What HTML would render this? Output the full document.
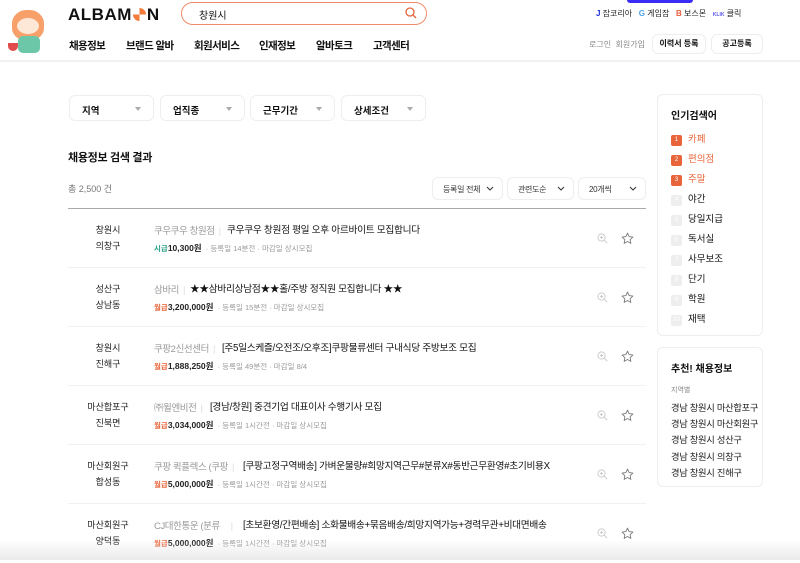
<!DOCTYPE html>
<html><head><meta charset="utf-8"><style>
*{margin:0;padding:0;box-sizing:border-box}
body{width:800px;height:560px;overflow:hidden;background:#fff;font-family:"Liberation Sans","Noto Sans CJK KR",sans-serif;color:#111;position:relative}
.a{position:absolute;white-space:nowrap}
.hdr{position:absolute;left:0;top:0;width:800px;height:62px;border-bottom:2px solid #f2f2f2}
.nav{font-size:10.5px;font-weight:700;top:38px;letter-spacing:-0.6px}
.box{position:absolute;border:1px solid #eee;border-radius:6px;background:#fff}
.flt{top:95px;height:26px;width:85px;font-size:9.5px;font-weight:700;padding:7px 0 0 12px}
.flt:after{content:"";position:absolute;right:12px;top:11px;border:3.5px solid transparent;border-top:4px solid #aaa}
.sel{top:177px;height:23px;font-size:8px;padding:6px 0 0 10px;color:#333;letter-spacing:-0.3px}
.sel svg{position:absolute;right:8px;top:8px}
.row{position:absolute;left:68px;width:578px;height:59px;border-bottom:1px solid #f2f2f2}
.loc{position:absolute;left:0;width:80px;text-align:center;font-size:9px;line-height:16px;top:13px;color:#222}
.co{position:absolute;left:86px;top:14px;font-size:9.5px;color:#999;letter-spacing:-0.4px}
.co i{font-style:normal;color:#ddd;margin:0 4px}
.ti{position:absolute;top:13px;font-size:9.7px;color:#111;letter-spacing:-0.3px}
.mt{position:absolute;left:86px;top:33px;font-size:7.5px;color:#999}
.mt b{font-size:8.5px;color:#222}
.mt .o{color:#e8643a;font-weight:700}
.mt .g{color:#2fa38a;font-weight:700}
.rk{font-size:9.5px;left:671px}
.rk span{display:inline-block;width:11px;height:11px;border-radius:2px;background:#eee;color:#fff;font-size:6px;text-align:center;line-height:11px;margin-right:6px;vertical-align:1px}
.rk.h span{background:#e8643a}.rk.h{color:#e8643a}
</style></head><body>
<div class="hdr"></div>
<div class="a" style="left:12px;top:10px;width:32px;height:30px;background:#f7a06a;border-radius:45% 45% 40% 40%"></div>
<div class="a" style="left:17px;top:18px;width:22px;height:16px;background:#fde8d8;border-radius:50%"></div>
<div class="a" style="left:18px;top:36px;width:22px;height:17px;background:#6cc7a8;border-radius:5px"></div>
<div class="a" style="left:8px;top:43px;width:10px;height:8px;background:#e24b4b;border-radius:0 0 8px 8px"></div>
<div class="a" style="left:68px;top:5px;font-size:17px;font-weight:900;letter-spacing:0.5px">ALBAM<span style="display:inline-block;width:13px;height:13px;border-radius:50%;background:conic-gradient(#f47b3a 0 25%,#fff 0 50%,#f47b3a 0 75%,#fff 0);vertical-align:-1px;margin:0 1px"></span>N</div>
<div class="a" style="left:181px;top:2px;width:246px;height:23px;border:1.5px solid #ef8b6a;border-radius:12px"></div>
<div class="a" style="left:199px;top:7px;font-size:10px">창원시</div>
<svg class="a" style="left:405px;top:7px" width="12" height="12" viewBox="0 0 12 12"><circle cx="5" cy="5" r="4" fill="none" stroke="#e8643a" stroke-width="1.3"/><path d="M8 8l3 3" stroke="#e8643a" stroke-width="1.3"/></svg>
<div class="a" style="left:627px;top:0;width:66px;height:3px;background:#3a2bf5;border-radius:0 0 3px 3px"></div>
<div class="a" style="left:596px;top:8px;font-size:8px;color:#222"><b style="color:#1b2bd8">J</b> 잡코리아 &nbsp; <b style="color:#4aa3e8">G</b> 게임잡 &nbsp; <b style="color:#e85a3a">B</b> 보스몬 &nbsp; <b style="color:#5a5ae8;font-size:5px">KLIK</b> 클릭</div>
<div class="a nav" style="left:69px">채용정보</div>
<div class="a nav" style="left:126px">브랜드 알바</div>
<div class="a nav" style="left:194px">회원서비스</div>
<div class="a nav" style="left:259px">인재정보</div>
<div class="a nav" style="left:316px">알바토크</div>
<div class="a nav" style="left:373px">고객센터</div>
<div class="a" style="left:589px;top:39px;font-size:8px;color:#888">로그인 &nbsp;회원가입</div>
<div class="box" style="left:652px;top:34px;width:54px;height:20px;font-size:8px;font-weight:700;text-align:center;line-height:18px">이력서 등록</div>
<div class="box" style="left:711px;top:34px;width:52px;height:20px;font-size:8px;font-weight:700;text-align:center;line-height:18px">공고등록</div>

<div class="box flt" style="left:69px">지역</div>
<div class="box flt" style="left:160px">업직종</div>
<div class="box flt" style="left:250px">근무기간</div>
<div class="box flt" style="left:341px">상세조건</div>
<div class="a" style="left:68px;top:149px;font-size:11px;font-weight:700;letter-spacing:-0.3px">채용정보 검색 결과</div>
<div class="a" style="left:68px;top:182px;font-size:9px;color:#777">총 2,500 건</div>
<div class="box sel" style="left:432px;width:71px">등록일 전체<svg width="8" height="6"><path d="M1 1l3 3 3-3" fill="none" stroke="#333"/></svg></div>
<div class="box sel" style="left:507px;width:67px">관련도순<svg width="8" height="6"><path d="M1 1l3 3 3-3" fill="none" stroke="#333"/></svg></div>
<div class="box sel" style="left:578px;width:68px">20개씩<svg width="8" height="6"><path d="M1 1l3 3 3-3" fill="none" stroke="#333"/></svg></div>
<div class="a" style="left:68px;top:208px;width:578px;height:1px;background:#aaa"></div>

<div class="row" style="top:209px"><div class="loc">창원시<br>의창구</div><div class="co">쿠우쿠우 창원점<i>|</i></div><div class="ti" style="left:159px">쿠우쿠우 창원점 평일 오후 아르바이트 모집합니다</div><div class="mt"><span class="g">시급</span><b>10,300원</b> &nbsp;· 등록일 14분전 · 마감일 상시모집</div></div>
<div class="row" style="top:268px"><div class="loc">성산구<br>상남동</div><div class="co">삼바리<i>|</i></div><div class="ti" style="left:122px">★★삼바리상남점★★홀/주방 정직원 모집합니다 ★★</div><div class="mt"><span class="o">월급</span><b>3,200,000원</b> &nbsp;· 등록일 15분전 · 마감일 상시모집</div></div>
<div class="row" style="top:327px"><div class="loc">창원시<br>진해구</div><div class="co">쿠팡2신선센터<i>|</i></div><div class="ti" style="left:154px">[주5일스케즐/오전조/오후조]쿠팡물류센터 구내식당 주방보조 모집</div><div class="mt"><span class="o">월급</span><b>1,888,250원</b> &nbsp;· 등록일 49분전 · 마감일 8/4</div></div>
<div class="row" style="top:386px"><div class="loc">마산합포구<br>진북면</div><div class="co">㈜윌엔비전<i>|</i></div><div class="ti" style="left:142px">[경남/창원] 중견기업 대표이사 수행기사 모집</div><div class="mt"><span class="o">월급</span><b>3,034,000원</b> &nbsp;· 등록일 1시간전 · 마감일 상시모집</div></div>
<div class="row" style="top:445px"><div class="loc">마산회원구<br>합성동</div><div class="co">쿠팡 퀵플렉스 (쿠팡<i>|</i></div><div class="ti" style="left:175px">[쿠팡고정구역배송] 가벼운물량#희망지역근무#분류X#동반근무환영#초기비용X</div><div class="mt"><span class="o">월급</span><b>5,000,000원</b> &nbsp;· 등록일 1시간전 · 마감일 상시모집</div></div>
<div class="row" style="top:504px;border:0"><div class="loc">마산회원구<br>양덕동</div><div class="co">CJ대한통운 (분류 &nbsp;&nbsp;<i>|</i></div><div class="ti" style="left:175px">[초보환영/간편배송] 소화물배송+묶음배송/희망지역가능+경력무관+비대면배송</div><div class="mt"><span class="o">월급</span><b>5,000,000원</b> &nbsp;· 등록일 1시간전 · 마감일 상시모집</div></div>

<div id="icons"></div>
<script>
var s='';[238,297,356,415,474,533].forEach(function(y){s+='<svg class="a" style="left:597px;top:'+(y-5)+'px" width="11" height="11" viewBox="0 0 11 11"><circle cx="4.5" cy="4.5" r="3.6" fill="none" stroke="#ccc"/><path d="M7.2 7.2l3 3M4.5 3v3M3 4.5h3" stroke="#ccc"/></svg><svg class="a" style="left:621px;top:'+(y-6)+'px" width="13" height="13" viewBox="0 0 24 24"><path d="M12 2l3 6.5 7 .8-5.2 4.8 1.4 7L12 17.6 5.8 21.1l1.4-7L2 9.3l7-.8z" fill="none" stroke="#777" stroke-width="1.6" stroke-linejoin="round"/></svg>';});document.getElementById('icons').innerHTML=s;
</script>
<div style="position:absolute;left:0;top:540px;width:800px;height:20px;background:linear-gradient(rgba(255,255,255,0),rgba(230,230,230,.8))"></div>

<div class="box" style="left:657px;top:94px;width:106px;height:242px"></div>
<div class="a" style="left:671px;top:107px;font-size:10px;font-weight:700">인기검색어</div>
<div class="a rk h" style="top:131px"><span>1</span>카페</div>
<div class="a rk h" style="top:151px"><span>2</span>편의점</div>
<div class="a rk h" style="top:171px"><span>3</span>주말</div>
<div class="a rk" style="top:191px"><span>4</span>야간</div>
<div class="a rk" style="top:211px"><span>5</span>당일지급</div>
<div class="a rk" style="top:231px"><span>6</span>독서실</div>
<div class="a rk" style="top:251px"><span>7</span>사무보조</div>
<div class="a rk" style="top:271px"><span>8</span>단기</div>
<div class="a rk" style="top:291px"><span>9</span>학원</div>
<div class="a rk" style="top:311px"><span>10</span>재택</div>
<div class="box" style="left:657px;top:347px;width:106px;height:140px"></div>
<div class="a" style="left:671px;top:360px;font-size:10px;font-weight:700">추천! 채용정보</div>
<div class="a" style="left:671px;top:385px;font-size:7px;color:#888">지역별</div>
<div class="a" style="left:671px;top:400px;font-size:9.3px;line-height:16.2px;color:#222;letter-spacing:-0.3px">경남 창원시 마산합포구<br>경남 창원시 마산회원구<br>경남 창원시 성산구<br>경남 창원시 의창구<br>경남 창원시 진해구</div>
</body></html>
